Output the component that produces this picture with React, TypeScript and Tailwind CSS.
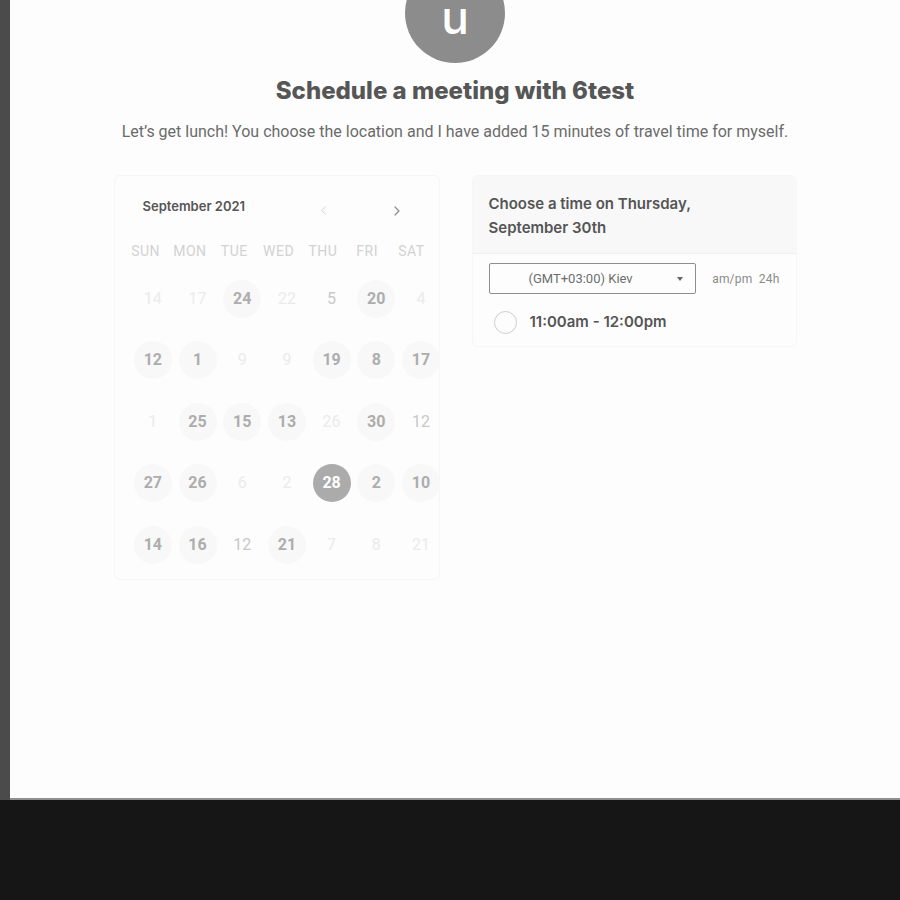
import { ChevronLeft, ChevronRight } from "lucide-react";

//@Types
type DayKind = "open" | "faint" | "plain" | "selected";

interface IDay {
  label: string;
  kind: DayKind;
}
//------------------------------------------------------

const weekdays = ["SUN", "MON", "TUE", "WED", "THU", "FRI", "SAT"];

const d = (label: string, kind: DayKind): IDay => ({ label, kind });

const weeks: IDay[][] = [
  [d("14", "faint"), d("17", "faint"), d("24", "open"), d("22", "faint"), d("5", "plain"), d("20", "open"), d("4", "faint")],
  [d("12", "open"), d("1", "open"), d("9", "faint"), d("9", "faint"), d("19", "open"), d("8", "open"), d("17", "open")],
  [d("1", "faint"), d("25", "open"), d("15", "open"), d("13", "open"), d("26", "faint"), d("30", "open"), d("12", "plain")],
  [d("27", "open"), d("26", "open"), d("6", "faint"), d("2", "faint"), d("28", "selected"), d("2", "open"), d("10", "open")],
  [d("14", "open"), d("16", "open"), d("12", "plain"), d("21", "open"), d("7", "faint"), d("8", "faint"), d("21", "faint")],
];
//------------------------------------------------------

function DayCell({ day }: { day: IDay }) {
  const styles: Record<DayKind, string> = {
    open: "bg-[#f8f8f8] text-[#adadad] font-bold",
    faint: "text-[#ebebeb]",
    plain: "text-[#c8c8c8]",
    selected: "bg-[#ababab] text-white font-bold",
  };
  return (
    <div className="flex items-center justify-center h-[61.5px]">
      <div
        className={
          "flex items-center justify-center w-[38px] h-[38px] rounded-full text-[16px] " +
          styles[day.kind]
        }
      >
        {day.label}
      </div>
    </div>
  );
}

function Calendar() {
  return (
    <div className="w-[326px] h-[405px] rounded-md border border-[#f6f6f6] bg-[#fdfdfd]">
      {/* month and arrows */}
      <div className="flex items-center h-[62px] pl-[28px]">
        <span className="w-[173px] text-[13px] font-semibold text-[#555] font-['Inter']">
          September 2021
        </span>
        <ChevronLeft className="mt-[7px] w-[15px] h-[15px] text-[#d0d0d0]" strokeWidth={1.5} />
        <ChevronRight className="mt-[7px] ml-[58px] w-[16px] h-[16px] text-[#8a8a8a]" strokeWidth={1.8} />
      </div>

      {/* weekdays */}
      <div className="grid grid-cols-[repeat(7,44.3px)] ml-[9px] h-[26px] items-center">
        {weekdays.map((w) => (
          <span key={w} className="text-center text-[14px] tracking-[0.5px] text-[#d2d2d2]">
            {w}
          </span>
        ))}
      </div>

      {/* days */}
      <div className="grid grid-cols-[repeat(7,44.7px)] ml-[16px] mt-[4px]">
        {weeks.flat().map((day, i) => (
          <DayCell key={i} day={day} />
        ))}
      </div>
    </div>
  );
}

function TimePanel() {
  return (
    <div className="w-[325px] h-[172px] rounded-md border border-[#f6f6f6] bg-[#fdfdfd] overflow-hidden">
      {/* header */}
      <div className="bg-[#f8f8f8] px-[16px] pt-[16px] pb-[14px] h-[78px] border-b border-[#f0f0f0]">
        <p className="text-[15px] leading-[24px] font-semibold text-[#555] font-['Inter']">
          Choose a time on Thursday,
          <br />
          September 30th
        </p>
      </div>

      {/* timezone */}
      <div className="flex items-center px-[16px] pt-[9px] gap-[16px]">
        <div className="flex items-center justify-between w-[208px] h-[31px] border border-[#8e8e8e] rounded-[2px] pl-[39px] pr-[12px]">
          <span className="text-[13px] text-[#6e6e6e]">(GMT+03:00) Kiev</span>
          <span className="w-0 h-0 border-l-[3.5px] border-r-[3.5px] border-t-[4px] border-l-transparent border-r-transparent border-t-[#666]" />
        </div>
        <span className="text-[12px] text-[#8a8a8a] tracking-[0.2px]">am/pm&nbsp;&nbsp;24h</span>
      </div>

      {/* slot */}
      <div className="flex items-center gap-[13px] px-[21px] pt-[17px]">
        <span className="w-[23px] h-[23px] rounded-full border-[1.5px] border-[#cdcdcd]" />
        <span className="text-[15px] font-semibold text-[#555] font-['Inter']">11:00am - 12:00pm</span>
      </div>
    </div>
  );
}

export default function App() {
  return (
    <div className="w-[900px] h-[900px] flex flex-col overflow-hidden font-['Roboto',sans-serif]">
      <div className="flex h-[800px]">
        <div className="w-[10px] bg-[#4b4b4b]" />
        <main className="flex-1 flex flex-col items-center bg-[#fdfdfd] border-b-2 border-[#8f8f8f]">
          {/* avatar */}
          <div className="mt-[-37px] w-[100px] h-[100px] rounded-full bg-[#8c8c8c] flex items-center justify-center">
            <span className="mt-[8px] text-[46px] leading-none font-medium font-['Inter'] text-white">u</span>
          </div>

          <h1 className="mt-[14px] text-[24px] leading-[28px] font-extrabold text-[#565656] font-['Inter']">
            Schedule a meeting with 6test
          </h1>
          <p className="mt-[17px] text-[16px] leading-[20px] text-[#6b6b6b]">
            Let’s get lunch! You choose the location and I have added 15 minutes of travel time for myself.
          </p>

          {/* calendar and times */}
          <div className="flex gap-[32px] mt-[33px] items-start">
            <Calendar />
            <TimePanel />
          </div>
        </main>
      </div>
      <div className="h-[100px] bg-[#161616]" />
    </div>
  );
}
